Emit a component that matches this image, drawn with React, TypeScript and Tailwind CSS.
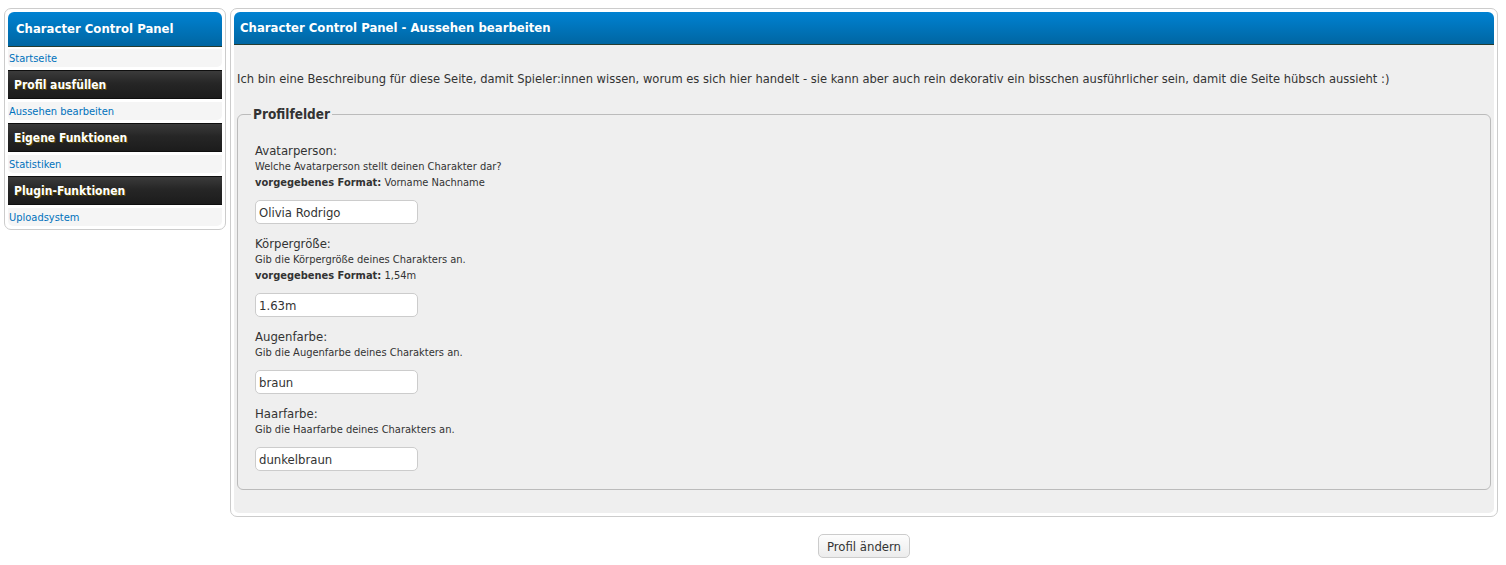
const navGroups = [
  { link: "Startseite" },
  { head: "Profil ausfüllen", link: "Aussehen bearbeiten" },
  { head: "Eigene Funktionen", link: "Statistiken" },
  { head: "Plugin-Funktionen", link: "Uploadsystem" },
];

const fields = [
  {
    label: "Avatarperson:",
    desc: "Welche Avatarperson stellt deinen Charakter dar?",
    format: "Vorname Nachname",
    value: "Olivia Rodrigo",
  },
  {
    label: "Körpergröße:",
    desc: "Gib die Körpergröße deines Charakters an.",
    format: "1,54m",
    value: "1.63m",
  },
  { label: "Augenfarbe:", desc: "Gib die Augenfarbe deines Charakters an.", value: "braun" },
  { label: "Haarfarbe:", desc: "Gib die Haarfarbe deines Charakters an.", value: "dunkelbraun" },
];

const thead =
  "bg-[linear-gradient(#0082d2,#0066a2)] border-b border-[#263c30] text-white font-bold text-[13px] rounded-t-[6px]";

const tcat =
  "h-[29px] flex items-center px-[6px] bg-[linear-gradient(#3b3b3b,#262626_45%,#1c1c1c)] border-y border-[#0f0f0f] text-white font-bold text-[12px] [text-shadow:1px_1px_0_#5a4a00]";

const App = () => {
  return (
    <div className="min-h-[565px] bg-white text-[#333] font-['DejaVu_Sans_Condensed','DejaVu_Sans',sans-serif] text-[13px]">
      <div className="flex items-start gap-[4px] pt-[8px] px-[4px] pr-[8px]">
        {/* sidebar */}
        <div className="w-[222px] shrink-0 border border-[#ccc] rounded-[7px] bg-white p-[3px]">
          <div className={`${thead} h-[35px] flex items-center px-[8px] text-[13.5px]`}>
            Character Control Panel
          </div>
          <div className="flex flex-col gap-[3px] pt-[2px]">
            {navGroups.map((g) => (
              <div key={g.link} className="flex flex-col gap-[3px]">
                {g.head && <div className={tcat}>{g.head}</div>}
                <a
                  href="#"
                  className="h-[18px] flex items-center pt-[2px] px-[1px] bg-[#f5f5f5] text-[#0072bc] text-[11px] last:rounded-b-[5px]"
                >
                  {g.link}
                </a>
              </div>
            ))}
          </div>
        </div>

        {/* main */}
        <div className="flex-1 flex flex-col items-center">
          <div className="w-full border border-[#ccc] rounded-[7px] bg-white p-[3px]">
            <div className={`${thead} h-[33px] flex items-center px-[6px]`}>
              Character Control Panel - Aussehen bearbeiten
            </div>
            <div className="bg-[#efefef] rounded-b-[5px] px-[3px] pt-[26px] pb-[23px]">
              <p className="leading-[16px] mb-[17px] text-[12.8px]">
                Ich bin eine Beschreibung für diese Seite, damit Spieler:innen wissen, worum es sich hier
                handelt - sie kann aber auch rein dekorativ ein bisschen ausführlicher sein, damit die Seite
                hübsch aussieht :)
              </p>
              <fieldset className="border border-[#bbb] rounded-[6px] mx-[0px] px-[17px] pt-[19px] pb-[18px]">
                <legend className="font-bold text-[13.5px] px-[2px] ml-[-4px]">Profilfelder</legend>
                <div className="flex flex-col gap-[12px]">
                  {fields.map((f) => (
                    <div key={f.label}>
                      <div className="leading-[16px]">{f.label}</div>
                      <div className="text-[11px] leading-[16px]">{f.desc}</div>
                      {f.format && (
                        <div className="text-[11px] leading-[16px]">
                          <b>vorgegebenes Format:</b> {f.format}
                        </div>
                      )}
                      <input
                        defaultValue={f.value}
                        className="mt-[9px] w-[163px] h-[24px] border border-[#ccc] rounded-[5px] bg-white px-[3px] text-[13px] text-[#333] outline-none"
                      />
                    </div>
                  ))}
                </div>
              </fieldset>
            </div>
          </div>
          <button className="mt-[17px] h-[24px] px-[8px] border border-[#ccc] rounded-[5px] bg-[linear-gradient(#fdfdfd,#ececec)] text-[13px] text-[#333]">
            Profil ändern
          </button>
        </div>
      </div>
    </div>
  );
};

export default App;
